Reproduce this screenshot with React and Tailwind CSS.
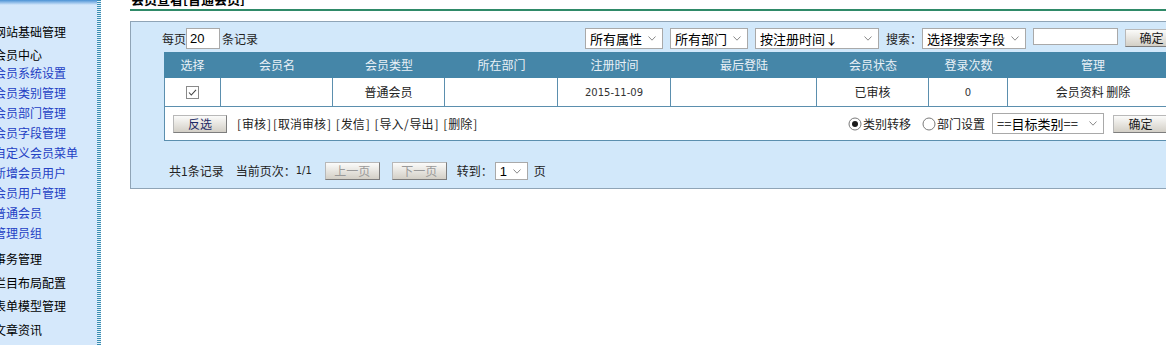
import React from 'react';

const Chevron = () => (
  <svg width="8" height="5" viewBox="0 0 8 5" className="shrink-0">
    <polyline points="0.5,0.5 4,4.2 7.5,0.5" fill="none" stroke="#8a8a8a" strokeWidth="1" />
  </svg>
);

const Select = ({ className = '', label, textClass = 'text-[13px]' }) => (
  <div className={`flex shrink-0 items-center justify-between border border-[#a9a9a9] bg-white pl-[4px] pr-[6px] leading-none text-black ${textClass} ${className}`}>
    <span className="whitespace-nowrap">{label}</span>
    <Chevron />
  </div>
);

const Btn = ({ className = '', children }) => (
  <div className={`flex shrink-0 items-center justify-center border border-t-[#b8b8b8] border-l-[#b8b8b8] border-r-[#7d7d7d] border-b-[#7d7d7d] bg-linear-to-b from-[#fbfbfa] to-[#d3cfc6] text-[12px] leading-none ${className}`}>
    {children}
  </div>
);

const Radio = ({ checked, className = '' }) => (
  <svg width="14" height="14" viewBox="0 0 14 14" className={`shrink-0 ${className}`}>
    <circle cx="7" cy="7" r="6" fill="white" stroke="#7a7a7a" strokeWidth="1" />
    {checked && <circle cx="7" cy="7" r="3" fill="#1a1a1a" />}
  </svg>
);

const Checkbox = () => (
  <svg width="13" height="13" viewBox="0 0 13 13">
    <rect x="0.5" y="0.5" width="12" height="12" fill="white" stroke="#8a8a8a" />
    <polyline points="3,6.5 5.3,9 10,3.8" fill="none" stroke="#444" strokeWidth="1.1" />
  </svg>
);

const Br = ({ c }) => <span className="inline-block w-[6px] text-center">{c}</span>;

const cols = [
  'w-[57px]',
  'w-[112px]',
  'w-[112px]',
  'w-[113px]',
  'w-[113px]',
  'w-[146px]',
  'w-[112px]',
  'w-[79px]',
  'w-[170px]',
];

const heads = ['选择', '会员名', '会员类型', '所在部门', '注册时间', '最后登陆', '会员状态', '登录次数', '管理'];

function Sidebar() {
  const blue = ['会员系统设置', '会员类别管理', '会员部门管理', '会员字段管理', '自定义会员菜单', '新增会员用户', '会员用户管理', '普通会员', '管理员组'];
  return (
    <aside className="flex h-full w-[101px] shrink-0 bg-[#d5e8fb]">
      <div className="flex w-[97px] flex-col overflow-hidden">
        <div className="h-[5px] shrink-0 bg-linear-to-b from-[#4a92d4] to-[#d5e8fb]" />
        <div className="-ml-[6px] flex flex-col whitespace-nowrap text-[12px] leading-[20px]">
          <div className="mt-[17px] h-[20px] text-black">网站基础管理</div>
          <div className="mt-[3px] h-[18px] text-black">会员中心</div>
          {blue.map((t) => (
            <div key={t} className="h-[20px] text-[#2340c4]">{t}</div>
          ))}
          <div className="mt-[6px] h-[24px] text-black">事务管理</div>
          <div className="h-[23px] text-black">栏目布局配置</div>
          <div className="h-[24px] text-black">表单模型管理</div>
          <div className="h-[24px] text-black">文章资讯</div>
        </div>
      </div>
      <div className="w-[4px] shrink-0 bg-[image:repeating-linear-gradient(to_bottom,#3b8db2_0px,#3b8db2_1px,#e2f1fb_1px,#e2f1fb_2px)]" />
    </aside>
  );
}

function Panel() {
  return (
    <div className="mt-[10px] w-[1082px] shrink-0 border border-[#8fa4b6] bg-[#d2e8fa] pb-[6px] pl-[33px] pr-[33px] pt-[6px]">
      {/* top controls */}
      <div className="flex h-[21px] w-[1014px] items-start justify-between">
        <div className="-ml-[2px] flex h-[21px] items-center">
          <span>每页</span>
          <div className="flex h-[21px] w-[34px] items-center border border-[#a9a9a9] bg-white pl-[3px] font-['Liberation_Sans',sans-serif] text-[13px] text-black">20</div>
          <span className="ml-[2px]">条记录</span>
        </div>
        <div className="flex items-start">
          <Select className="h-[21px] w-[78px]" label="所有属性" />
          <Select className="ml-[7px] h-[21px] w-[78px]" label="所有部门" />
          <Select className="ml-[7px] h-[21px] w-[124px]" label="按注册时间↓" />
          <span className="ml-[7px] whitespace-nowrap leading-[21px]">搜索：</span>
          <Select className="h-[21px] w-[104px]" label="选择搜索字段" />
          <div className="ml-[7px] h-[17px] w-[85px] border border-[#a9a9a9] bg-white" />
          <Btn className="ml-[7px] mt-[1px] h-[18px] w-[53px] text-[#1a1a1a]">确定</Btn>
        </div>
      </div>

      {/* table header */}
      <div className="mt-[3px] flex h-[26px] w-[1014px] bg-[#4586a8] text-[#e9f1f7]">
        {heads.map((h, i) => (
          <div key={h} className={`flex items-center justify-center ${cols[i]}`}>{h}</div>
        ))}
      </div>

      {/* data row */}
      <div className="flex h-[29px] w-[1014px] border-b border-[#5b8fae] bg-white text-[#222]">
        <div className={`flex items-center justify-center border-l border-r border-[#5b8fae] ${cols[0]}`}><Checkbox /></div>
        <div className={`border-r border-[#5b8fae] ${cols[1]}`} />
        <div className={`flex items-center justify-center border-r border-[#5b8fae] ${cols[2]}`}>普通会员</div>
        <div className={`border-r border-[#5b8fae] ${cols[3]}`} />
        <div className={`flex items-center justify-center border-r border-[#5b8fae] font-['DejaVu_Sans',sans-serif] text-[10px] text-[#333] ${cols[4]}`}>2015-11-09</div>
        <div className={`border-r border-[#5b8fae] ${cols[5]}`} />
        <div className={`flex items-center justify-center border-r border-[#5b8fae] ${cols[6]}`}>已审核</div>
        <div className={`flex items-center justify-center border-r border-[#5b8fae] font-['DejaVu_Sans',sans-serif] text-[10px] text-[#333] ${cols[7]}`}>0</div>
        <div className={`flex items-center justify-center ${cols[8]}`}>会员资料&nbsp;删除</div>
      </div>

      {/* action row */}
      <div className="flex h-[34px] w-[1014px] items-center border-b border-l border-[#5b8fae] bg-white pl-[8px] pr-[10px]">
        <Btn className="h-[18px] w-[54px] text-[#1d2a66]">反选</Btn>
        <div className="ml-[9px] whitespace-nowrap text-[#222]">
          <Br c="[" />审核<Br c="]" />
          <Br c="[" />取消审核<Br c="]" />{' '}
          <Br c="[" />发信<Br c="]" />{' '}
          <Br c="[" />导入<Br c="/" />导出<Br c="]" />{' '}
          <Br c="[" />删除<Br c="]" />
        </div>
        <div className="ml-auto flex items-center">
          <Radio checked />
          <span className="ml-[1px]">类别转移</span>
          <Radio className="ml-[11px]" />
          <span className="ml-[1px]">部门设置</span>
          <Select className="ml-[7px] h-[21px] w-[112px]" label="==目标类别==" />
          <Btn className="ml-[9px] h-[18px] w-[55px] text-[#1a1a1a]">确定</Btn>
        </div>
      </div>

      {/* pagination */}
      <div className="mt-[19px] flex h-[22px] items-center whitespace-nowrap pl-[5px]">
        <span>共1条记录</span>
        <span className="ml-[12px]">当前页次：</span>
        <span className="font-['DejaVu_Sans',sans-serif] text-[10px] leading-[12px]">1/1</span>
        <Btn className="ml-[13px] h-[18px] w-[55px] text-[#9a9a9a]">上一页</Btn>
        <Btn className="ml-[12px] h-[18px] w-[55px] text-[#9a9a9a]">下一页</Btn>
        <span className="ml-[10px]">转到：</span>
        <Select className="ml-[2px] h-[18px] w-[33px]" textClass="text-[13px] font-['Liberation_Sans',sans-serif]" label="1" />
        <span className="ml-[6px]">页</span>
      </div>
    </div>
  );
}

export default function App() {
  return (
    <div className="flex h-[345px] w-[1166px] overflow-hidden bg-white font-['Noto_Sans_CJK_SC',sans-serif] text-[12px] text-[#222]">
      <Sidebar />
      <main className="min-w-0 flex-1 pl-[29px]">
        <div className="-mt-[9px] w-[1100px] border-b-2 border-[#2f8a68] pb-[3px] pl-[1px] text-[13px] font-bold leading-[15px] text-black">会员查看[普通会员]</div>
        <Panel />
      </main>
    </div>
  );
}
